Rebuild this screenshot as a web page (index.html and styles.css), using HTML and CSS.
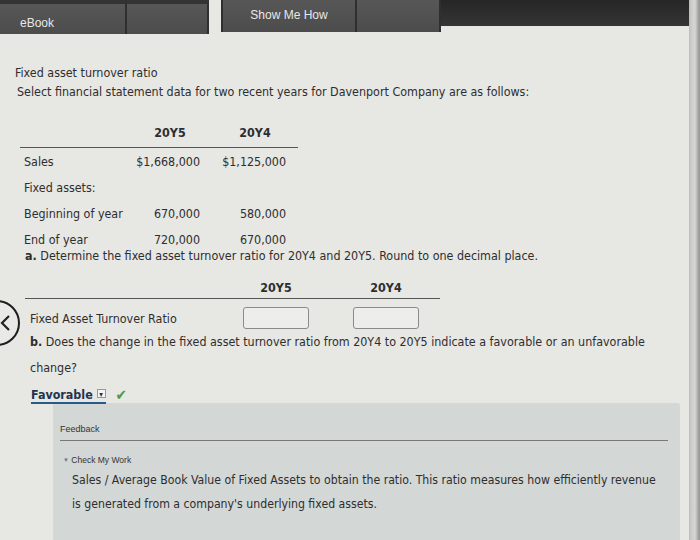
FILE: index.html
```html
<!DOCTYPE html>
<html>
<head>
<meta charset="utf-8">
<link rel="stylesheet" href="styles.css">
</head>
<body>
<div class="screen">
  <div class="page">
    <div class="topbar">
      <div class="tab tab-ebook">eBook</div>
      <div class="tab tab-blank1"></div>
      <div class="tab tab-show">Show Me How</div>
      <div class="tab tab-blank2"></div>
      <div class="filler"></div>
    </div>

    <div class="content">
      <p class="title">Fixed asset turnover ratio</p>
      <p class="intro">Select financial statement data for two recent years for Davenport Company are as follows:</p>

      <div class="data">
        <div class="row head"><span></span><span class="hc hc1">20Y5</span><span class="hc hc2">20Y4</span></div>
        <div class="row"><span>Sales</span><span class="num">$1,668,000</span><span class="num">$1,125,000</span></div>
        <div class="row"><span>Fixed assets:</span><span></span><span></span></div>
        <div class="row"><span>Beginning of year</span><span class="num">670,000</span><span class="num">580,000</span></div>
        <div class="row"><span>End of year</span><span class="num">720,000</span><span class="num">670,000</span></div>
      </div>

      <p class="qa"><b>a.</b> Determine the fixed asset turnover ratio for 20Y4 and 20Y5. Round to one decimal place.</p>

      <div class="answer">
        <div class="arow ahead"><span></span><span class="hc">20Y5</span><span class="hc">20Y4</span></div>
        <div class="arow"><span class="alabel">Fixed Asset Turnover Ratio</span><span class="box"></span><span class="box"></span></div>
      </div>

      <p class="qb"><b>b.</b> Does the change in the fixed asset turnover ratio from 20Y4 to 20Y5 indicate a favorable or an unfavorable<br><span>change?</span></p>

      <div class="pick">
        <span class="select">Favorable <span class="caret">&#9662;</span></span>
        <span class="check">&#10004;</span>
      </div>

      <div class="feedback">
        <div class="fb-title">Feedback</div>
        <div class="fb-rule"></div>
        <div class="fb-check"><span class="tri">&#9660;</span> Check My Work</div>
        <p class="fb-text">Sales / Average Book Value of Fixed Assets to obtain the ratio. This ratio measures how efficiently revenue is generated from a company's underlying fixed assets.</p>
      </div>
    </div>

    <div class="navcircle"><svg width="14" height="18" viewBox="0 0 14 18"><path d="M11 2 L4 9 L11 16" fill="none" stroke="#222" stroke-width="2.2"/></svg></div>
  </div>
  <div class="edge"></div>
</div>
</body>
</html>
```

FILE: styles.css
```css
* { box-sizing: border-box; }
html, body { margin: 0; padding: 0; }
body {
  width: 700px;
  height: 540px;
  overflow: hidden;
  background: #e5e5e2;
  font-family: "DejaVu Sans Condensed", "DejaVu Sans", sans-serif;
  font-size: 12.4px;
  color: #2e2e2e;
}
.screen { display: flex; height: 540px; }
.page {
  position: relative;
  width: 689px;
  height: 540px;
  background: #e7e7e4;
  overflow: hidden;
}
.edge {
  width: 11px;
  background: linear-gradient(to right, #bdbdbb 0, #cfcfcc 3px, #d6d6d3 6px, #9a9a98 10px);
}
.topbar {
  display: flex;
  align-items: flex-start;
  height: 36px;
}
.tab {
  height: 34px;
  background: linear-gradient(#575757, #4c4c4c);
  color: #e8e8e8;
  font-family: "Liberation Sans", Arial, sans-serif;
  font-size: 12px;
  display: flex;
  align-items: center;
  border-right: 2px solid #2f2f2f;
}
.tab-ebook { width: 127px; padding-left: 20px; padding-top: 8px; border-top: 4px solid #333; }
.tab-blank1 { width: 82px; border-top: 4px solid #333; }
.tab-show { width: 136px; justify-content: center; padding-bottom: 2px; margin-left: 12px; border-left: 2px solid #2f2f2f; height: 32px; }
.tab-blank2 { width: 84px; height: 32px; }
.filler { flex: 1; height: 26px; background: linear-gradient(#262626, #353535); }

.content { padding-left: 15px; }
p { margin: 0; }
.title { margin-top: 29px; line-height: 16px; }
.intro { margin-top: 3px; line-height: 16px; padding-left: 2px; }

.data { margin-top: 19px; margin-left: 5px; width: 278px; }
.row {
  display: grid;
  grid-template-columns: 108px 68px 86px;
  height: 26px;
  align-items: center;
  padding-left: 4px;
}
.row.head {
  height: 29px;
  border-bottom: 1px solid #555;
  align-items: start;
  padding-top: 6px;
}
.hc { text-align: center; font-weight: bold; }
.hc1 { padding-left: 8px; }
.hc2 { padding-left: 24px; }
.num { text-align: right; }

.qa { margin-top: -3px; margin-left: 10px; line-height: 14px; }

.answer { margin-top: 17px; margin-left: 10px; width: 415px; }
.arow {
  display: grid;
  grid-template-columns: 218px 66px 44px 66px;
  align-items: end;
}
.arow span:nth-child(3) { grid-column: 4; }
.ahead { height: 19px; border-bottom: 1px solid #555; padding-bottom: 3px; }
.alabel { padding-left: 5px; line-height: 12px; margin-bottom: 4px; }
.box {
  height: 22px;
  margin-top: 8px;
  border: 1px solid #8a8a8a;
  border-radius: 3px;
  background: #ededeb;
}

.qb { margin-left: 15px; margin-top: 0; line-height: 26px; width: 640px; }

.pick { margin-left: 16px; margin-top: 3px; display: flex; align-items: center; gap: 10px; height: 22px; }
.select {
  font-weight: bold;
  color: #1e3552;
  border-bottom: 2px solid #2b5a86;
  line-height: 15px;
}
.caret {
  display: inline-block;
  font-size: 8px;
  width: 9px;
  height: 9px;
  line-height: 9px;
  text-align: center;
  background: #f4f4f4;
  border: 1px solid #999;
  vertical-align: 2px;
}
.check { color: #4d9a3e; font-size: 15px; }

.feedback {
  margin-top: -3px;
  margin-left: 38px;
  width: 627px;
  height: 150px;
  background: #d3d7d6;
  border-radius: 2px;
  padding: 19px 12px 0 7px;
  font-family: "Liberation Sans", Arial, sans-serif;
}
.fb-title { font-size: 9px; line-height: 14px; color: #333; }
.fb-rule { height: 1px; background: #777; margin-top: 4px; }
.fb-check { font-size: 8.5px; margin-top: 13px; margin-left: 3px; color: #333; line-height: 12px; }
.tri { font-size: 6px; color: #777; vertical-align: 1px; }
.fb-text {
  font-family: "DejaVu Sans Condensed", "DejaVu Sans", sans-serif;
  font-size: 12.2px;
  line-height: 24px;
  margin-left: 12px;
  margin-top: 2px;
  max-width: 590px;
  color: #2e2e2e;
}

.navcircle {
  position: absolute;
  left: -26px;
  top: 300px;
  width: 46px;
  height: 46px;
  border-radius: 50%;
  border: 2px solid #1e1e1e;
  background: #e9e9e6;
  display: flex;
  align-items: center;
  justify-content: flex-end;
  padding-right: 6px;
}
```
